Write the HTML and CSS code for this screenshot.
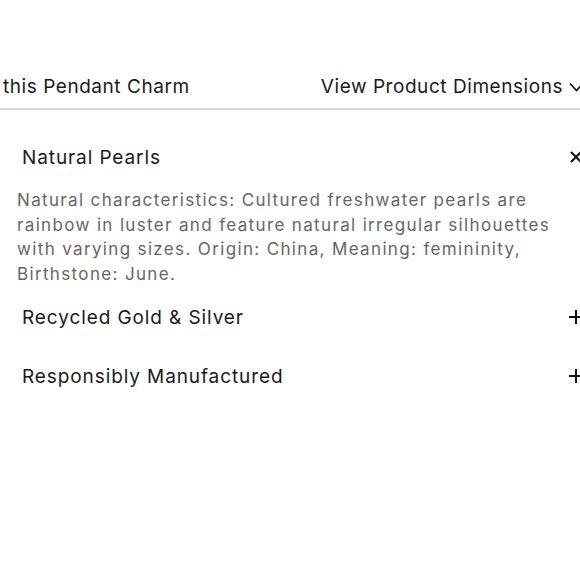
FILE: index.html
```html
<!DOCTYPE html>
<html>
<head>
<meta charset="utf-8">
<link rel="stylesheet" href="styles.css">
</head>
<body>
<div class="page">
  <div class="tabs">
    <span class="tab">this Pendant Charm</span>
    <span class="tab">View Product Dimensions
      <svg class="chev" width="15" height="10" viewBox="0 0 15 10"><path d="M1 1.5 L7.5 8.5 L14 1.5" fill="none" stroke="#111" stroke-width="1.6"/></svg>
    </span>
  </div>
  <div class="acc">
    <div class="acc-item open">
      <div class="acc-head">
        <span class="acc-title">Natural Pearls</span>
        <svg class="icon icon-x" width="14" height="14" viewBox="0 0 14 14"><path d="M2 2 L12 12 M12 2 L2 12" stroke="#111" stroke-width="2"/></svg>
      </div>
      <p class="acc-body">Natural characteristics: Cultured freshwater pearls are rainbow in luster and feature natural irregular silhouettes with varying sizes. Origin: China, Meaning: femininity, Birthstone: June.</p>
    </div>
    <div class="acc-item">
      <div class="acc-head">
        <span class="acc-title">Recycled Gold &amp; Silver</span>
        <svg class="icon" width="16" height="16" viewBox="0 0 16 16"><path d="M8 1 V15 M1 8 H15" stroke="#111" stroke-width="2"/></svg>
      </div>
    </div>
    <div class="acc-item">
      <div class="acc-head">
        <span class="acc-title">Responsibly Manufactured</span>
        <svg class="icon" width="16" height="16" viewBox="0 0 16 16"><path d="M8 1 V15 M1 8 H15" stroke="#111" stroke-width="2"/></svg>
      </div>
    </div>
  </div>
</div>
</body>
</html>
```
FILE: styles.css
```css
html, body {
  margin: 0;
  padding: 0;
  background: #fff;
  overflow: hidden;
}
body {
  font-family: Inter, "Liberation Sans", sans-serif;
  color: #1a1a1a;
}
.page {
  width: 580px;
  height: 580px;
  overflow: hidden;
}
.tabs {
  width: 584px;
  display: flex;
  justify-content: space-between;
  align-items: center;
  padding: 75px 0 9px 3px;
  border-bottom: 2px solid #d4d4d4;
  box-sizing: border-box;
}
.tab {
  font-size: 19px;
  line-height: 24px;
  letter-spacing: 0.55px;
  white-space: nowrap;
  display: flex;
  align-items: center;
}
.chev {
  margin-left: 6px;
  flex: none;
}
.acc {
  width: 580px;
}
.acc-head {
  display: flex;
  justify-content: space-between;
  align-items: center;
  padding-left: 22px;
  height: 24px;
}
.acc-item:first-child .acc-head {
  margin-top: 35px;
}
.acc-title {
  font-size: 19px;
  letter-spacing: 0.9px;
  white-space: nowrap;
}
.icon {
  flex: none;
  margin-right: -4px;
}
.icon-x {
  margin-right: -3px;
}
.acc-body {
  margin: 19px 0 0 17px;
  font-size: 17px;
  line-height: 24.5px;
  letter-spacing: 1.35px;
  color: #666;
  width: 545px;
}
.acc-item:nth-child(2) .acc-head {
  margin-top: 19px;
}
.acc-item:nth-child(3) .acc-head {
  margin-top: 35px;
}
```
